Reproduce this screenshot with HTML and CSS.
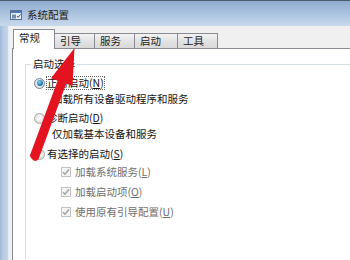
FILE: index.html
```html
<!DOCTYPE html>
<html lang="zh">
<head>
<meta charset="utf-8">
<link rel="stylesheet" href="styles.css">
</head>
<body>
<div class="window">
  <div class="titlebar">
    <svg class="app-icon" width="12" height="10" viewBox="0 0 12 10">
      <rect x="0.5" y="0.5" width="11" height="9" fill="#e9eef5" stroke="#5b6f8c"/>
      <rect x="1" y="1" width="10" height="2" fill="#4d78b4"/>
      <rect x="2" y="4.5" width="4" height="4" fill="#6e8db8"/>
      <path d="M7 6 l1.2 1.4 L10.5 4.3" fill="none" stroke="#3a5f95" stroke-width="1"/>
    </svg>
    <span class="title">系统配置</span>
  </div>
  <div class="main">
    <div class="frame-left"></div>
    <div class="client">
      <div class="tabs">
        <div class="tab active">常规</div>
        <div class="tab">引导</div>
        <div class="tab">服务</div>
        <div class="tab wide">启动</div>
        <div class="tab">工具</div>
      </div>
      <div class="panel">
        <fieldset class="group">
          <legend class="group-label">启动选择</legend>
          <div class="group-body">
            <div class="opt">
              <span class="radio checked"></span>
              <span class="label focus">正常启动(<u>N</u>)</span>
            </div>
            <div class="desc">加载所有设备驱动程序和服务</div>
            <div class="opt opt-2">
              <span class="radio"></span>
              <span class="label">诊断启动(<u>D</u>)</span>
            </div>
            <div class="desc">仅加载基本设备和服务</div>
            <div class="opt opt-3">
              <span class="radio"></span>
              <span class="label">有选择的启动(<u>S</u>)</span>
            </div>
            <div class="check first">
              <span class="box"><svg width="8" height="8" viewBox="0 0 8 8"><path d="M1 4.2 L3 6.3 L7 1.2" fill="none" stroke="#a3a3a3" stroke-width="1.4"/></svg></span>
              <span class="label dim">加载系统服务(<u>L</u>)</span>
            </div>
            <div class="check">
              <span class="box"><svg width="8" height="8" viewBox="0 0 8 8"><path d="M1 4.2 L3 6.3 L7 1.2" fill="none" stroke="#a3a3a3" stroke-width="1.4"/></svg></span>
              <span class="label dim">加载启动项(<u>O</u>)</span>
            </div>
            <div class="check">
              <span class="box"><svg width="8" height="8" viewBox="0 0 8 8"><path d="M1 4.2 L3 6.3 L7 1.2" fill="none" stroke="#a3a3a3" stroke-width="1.4"/></svg></span>
              <span class="label dim">使用原有引导配置(<u>U</u>)</span>
            </div>
          </div>
        </fieldset>
      </div>
    </div>
  </div>
</div>
<svg class="arrow" width="350" height="260" viewBox="0 0 350 260">
  <path d="M74.5 48 L72.5 86 L66.2 83.7 L38.6 159 Q34 164 29.8 155.8 L57.6 80.8 L51 78.3 Z" fill="#e3141f"/>
</svg>
</body>
</html>
```

FILE: styles.css
```css
html, body {
  margin: 0;
  padding: 0;
}
body {
  width: 350px;
  height: 260px;
  overflow: hidden;
  position: relative;
  font-family: "Noto Sans CJK SC", "Noto Sans", sans-serif;
  font-size: 10.5px;
  color: #141414;
  background: #bcd0e6;
}
.window {
  display: flex;
  flex-direction: column;
  height: 260px;
}
.titlebar {
  box-sizing: border-box;
  height: 26px;
  border-top: 1px solid #4b5a6f;
  background: linear-gradient(#8eaacf 0%, #a9c1de 45%, #c8d9ed 100%);
  display: flex;
  align-items: center;
  padding: 3px 0 0 10px;
  gap: 5px;
}
.title {
  line-height: 12px;
  color: #1a1a1a;
}
.main {
  flex: 1;
  display: flex;
  min-height: 0;
}
.frame-left {
  width: 8px;
  background: linear-gradient(90deg, #9fb8d7 0%, #b7cbe3 40%, #c6d6ea 100%);
  border-right: 1px solid #e3ebf4;
}
.client {
  flex: 1;
  background: #f0f0f0;
  padding: 3px 0 0 3px;
  display: flex;
  flex-direction: column;
  min-width: 0;
  min-height: 0;
}
.tabs {
  display: flex;
  align-items: flex-end;
  height: 19px;
  margin-left: 1px;
}
.tab {
  box-sizing: border-box;
  width: 40px;
  height: 15px;
  padding-left: 5px;
  line-height: 14px;
  border-top: 1px solid #898c95;
  border-right: 1px solid #898c95;
  background: linear-gradient(#f3f3f3, #e3e3e3 50%, #d9d9d9);
  color: #1b1b1b;
}
.tab.wide {
  width: 43px;
}
.tab.active {
  width: 42px;
  height: 20px;
  margin-bottom: -1px;
  border-left: 1px solid #898c95;
  background: #ffffff;
  line-height: 16px;
  position: relative;
  z-index: 1;
}
.panel {
  flex: 1;
  background: #ffffff;
  border-top: 1px solid #898c95;
  border-left: 1px solid #898c95;
  padding: 9px 0 0 12px;
  min-height: 0;
  overflow: hidden;
}
.group {
  margin: 0;
  padding: 0;
  height: 200px;
  border: 1px solid #d5dfe5;
  border-right: none;
  border-bottom: none;
}
.group-label {
  margin-left: 5px;
  padding: 0 2px;
  line-height: 12px;
}
.group-body {
  padding: 5px 0 0 8px;
}
.opt, .check, .desc {
  line-height: 16px;
  height: 16px;
}
.opt {
  display: flex;
  align-items: center;
  gap: 2px;
}
.opt-2 {
  margin-top: 3px;
}
.opt-3 {
  margin-top: 4px;
}
.desc {
  margin-left: 18px;
}
.label {
  white-space: nowrap;
  line-height: 12px;
}
.focus {
  outline: 1px dotted #666;
  outline-offset: 0;
}
.radio {
  width: 11px;
  height: 11px;
  box-sizing: border-box;
  border-radius: 50%;
  border: 1px solid #a8a8a8;
  background: radial-gradient(circle at 50% 45%, #ffffff 0%, #e6e6e6 60%, #d0d0d0 100%);
  display: flex;
  align-items: center;
  justify-content: center;
}
.radio.checked {
  border-color: #6d8196;
}
.radio.checked::after {
  content: "";
  width: 6px;
  height: 6px;
  border-radius: 50%;
  background: radial-gradient(circle at 40% 35%, #8fd6f2 0%, #1c78b5 60%, #0e3f70 100%);
}
.check {
  display: flex;
  align-items: center;
  gap: 4px;
  margin-left: 27px;
  margin-top: 4px;
}
.check.first {
  margin-top: 2px;
}
.box {
  width: 10px;
  height: 10px;
  box-sizing: border-box;
  border: 1px solid #c2c2c2;
  background: #f4f4f4;
  display: flex;
  align-items: center;
  justify-content: center;
}
.dim {
  color: #6e6e6e;
}
u {
  text-decoration-thickness: 1px;
}
.arrow {
  position: absolute;
  left: 0;
  top: 0;
  pointer-events: none;
}
```
